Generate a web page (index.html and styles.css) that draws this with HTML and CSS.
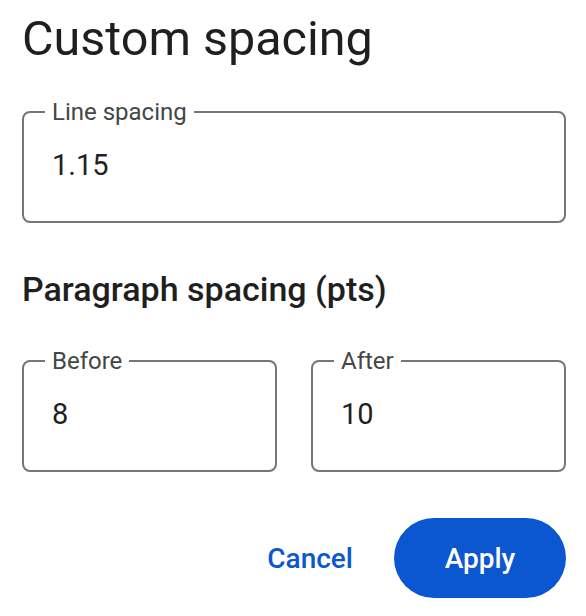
FILE: index.html
```html
<!DOCTYPE html>
<html lang="en">
<head>
  <meta charset="UTF-8" />
  <meta name="viewport" content="width=device-width, initial-scale=1.0"/>
  <title>Custom spacing</title>
  <link rel="stylesheet" href="styles.css">
</head>

<body>

  <div class="dialog">
    <h1 class="title">Custom spacing</h1>

    <!-- Line spacing -->
    <fieldset class="field">
      <legend>Line spacing</legend>
      <input type="text" value="1.15" />
    </fieldset>

    <h2 class="section">Paragraph spacing (pts)</h2>

    <div class="field-row">
      <fieldset class="field">
        <legend>Before</legend>
        <input type="text" value="8" />
      </fieldset>
      <fieldset class="field">
        <legend>After</legend>
        <input type="text" value="10" />
      </fieldset>
    </div>

    <!-- Buttons -->
    <div class="actions">
      <button class="btn-text">Cancel</button>
      <button class="btn-filled">Apply</button>
    </div>
  </div>

</body>
</html>
```

FILE: styles.css
```css
body {
  margin: 0;
  background: #fff;
  color: #1f1f1f;
  font-family: Roboto, "Noto Sans", Arial, sans-serif;
}
.dialog {
  padding: 0 20px 0 22px;
}
.title {
  margin: 7px 0 0;
  font-size: 48.5px;
  font-weight: 400;
  line-height: 64px;
}
.field {
  margin: 28px 0 0;
  padding: 22px 28px 38px;
  border: 2px solid #747775;
  border-radius: 8px;
  min-width: 0;
}
.field legend {
  margin-left: -7px;
  padding: 0 7px;
  font-size: 24px;
  line-height: 26px;
  color: #444746;
}
.field input {
  display: block;
  width: 100%;
  border: none;
  outline: none;
  padding: 0;
  margin: 0;
  font-family: inherit;
  font-size: 29px;
  line-height: 36px;
  height: 36px;
  color: #1f1f1f;
  background: transparent;
}
.section {
  margin: 47px 0 0;
  font-size: 34px;
  font-weight: 500;
  line-height: 38px;
}
.field-row {
  display: flex;
  gap: 34px;
}
.field-row .field {
  flex: 1;
  margin-top: 40px;
}
.actions {
  display: flex;
  justify-content: flex-end;
  align-items: center;
  gap: 21px;
  margin-top: 46px;
}
.actions button {
  font-family: inherit;
  font-size: 28px;
  font-weight: 500;
  border: none;
  cursor: pointer;
}
.btn-text {
  background: none;
  color: #0b57d0;
  padding: 0 20px;
  height: 80px;
}
.btn-filled {
  background: #0b57d0;
  color: #fff;
  width: 172px;
  height: 80px;
  border-radius: 40px;
}
```
